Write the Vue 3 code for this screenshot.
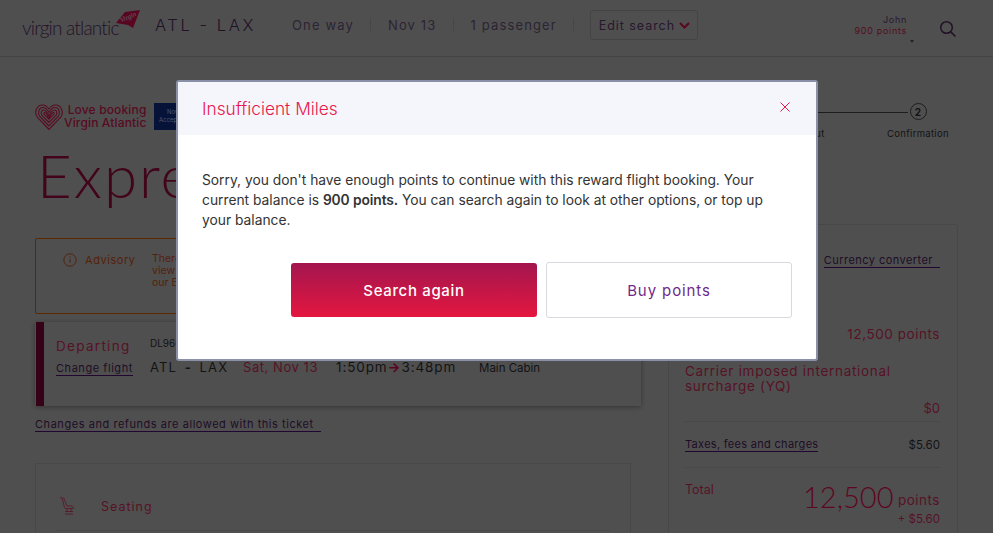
<script setup>
const title = 'Insufficient Miles'
</script>

<template>
  <div class="page">
    <header class="topbar">
      <div class="logo">
        <span class="logo-word">virgin atlantic</span>
        <svg class="logo-tail" width="24" height="18" viewBox="0 0 24 18">
          <polygon points="24,0 9,2 0,13 12,15 17,18" fill="#800a2e" />
          <text x="13" y="9" transform="rotate(-24 13 9)" class="logo-script">Virgin</text>
        </svg>
      </div>
      <span class="route">ATL - LAX</span>
      <div class="trip">
        <span>One way</span>
        <i></i>
        <span>Nov 13</span>
        <i></i>
        <span>1 passenger</span>
        <i></i>
      </div>
      <button class="edit">
        Edit search
        <svg width="11" height="7" viewBox="0 0 11 7"><path d="M1 1l4.500 4.500L10 1" fill="none" stroke="#800a2e" stroke-width="2" /></svg>
      </button>
      <div class="user">
        <span class="user-name">John</span>
        <span class="user-points">900 points</span>
        <span class="caret"></span>
      </div>
      <svg class="search" width="18" height="18" viewBox="0 0 18 18">
        <circle cx="7.500" cy="7.500" r="5.800" fill="none" stroke="#301a3a" stroke-width="1.500" />
        <path d="M11.800 11.800L16.500 16.500" stroke="#301a3a" stroke-width="1.700" />
      </svg>
    </header>

    <main class="main">
      <div class="top-row">
        <div class="banner">
          <svg width="28" height="26" viewBox="0 0 28 26" fill="none" stroke="#7e1030" stroke-width="1.100">
            <path d="M14 25.500L2.500 13.500C-1 9.500 1 1 7.500 1C10.500 1 12.500 2.800 14 5C15.500 2.800 17.500 1 20.500 1C27 1 29 9.500 25.500 13.500Z" />
            <path d="M14 22L4.800 12.500C2.500 9.800 3.500 3.500 7.800 3.500C10.500 3.500 12.500 5.800 14 8.500C15.500 5.800 17.500 3.500 20.200 3.500C24.500 3.500 25.500 9.800 23.200 12.500Z" />
            <path d="M14 18.500L7 11.500C5.500 9.500 6.200 6 8.300 6C10.800 6 12.500 8.800 14 12C15.500 8.800 17.200 6 19.700 6C21.800 6 22.500 9.500 21 11.500Z" />
            <path d="M14 15L9.300 10.500C8.500 9.500 8.800 8.500 9.500 8.500C11 8.500 12.800 11.500 14 15C15.200 11.500 17 8.500 18.500 8.500C19.200 8.500 19.500 9.500 18.700 10.500Z" />
          </svg>
          <div class="banner-text">Love booking<br />Virgin Atlantic</div>
          <div class="badge">Now<br />Accepting</div>
        </div>
        <div class="stepper">
          <div class="step">
            <span class="step-dot">1</span>
            <span class="step-label">Checkout</span>
          </div>
          <div class="step-line"></div>
          <div class="step">
            <span class="step-dot">2</span>
            <span class="step-label">Confirmation</span>
          </div>
        </div>
      </div>

      <h1 class="hero">Express checkout</h1>

      <div class="columns">
        <div class="left">
          <div class="advisory">
            <svg width="14" height="14" viewBox="0 0 14 14" fill="none" stroke="#7a3010">
              <circle cx="7" cy="7" r="6.200" />
              <path d="M7 6v4M7 3.500v1.200" />
            </svg>
            <span class="advisory-label">Advisory</span>
            <p class="advisory-text">There are travel restrictions in place,<br />view the latest information on<br />our Entry page.</p>
          </div>

          <div class="flight">
            <div class="flight-bar"></div>
            <div class="flight-side">
              <span class="departing">Departing</span>
              <a class="link">Change flight</a>
            </div>
            <div class="flight-info">
              <span class="flight-no">DL9665</span>
              <div class="flight-row">
                <span class="flight-route">ATL <b>-</b> LAX</span>
                <span class="flight-date">Sat, Nov 13</span>
                <span class="flight-time">1:50pm<em>→</em>3:48pm</span>
                <span class="flight-cabin">Main Cabin</span>
              </div>
            </div>
          </div>

          <a class="link changes">Changes and refunds are allowed with this ticket &nbsp;</a>

          <div class="extras">
            <div class="extras-row">
              <svg width="16" height="18" viewBox="0 0 16 18" fill="none" stroke="#7d1a36" stroke-width=".8">
                <path d="M1 .5l2 .3 2.500 9.700c.2.700.6 1 1.300 1h7c1 0 1.200-1.200.4-1.600L12.500 9H8L4.500 .5" />
                <path d="M6 14.500h8M6 17h8M8 12v2.500M12 12v2.500" />
              </svg>
              <span class="extras-label">Seating</span>
            </div>
          </div>
        </div>

        <aside class="summary">
          <a class="link converter">Currency converter &nbsp;</a>
          <div class="sum-points">12,500 points</div>
          <div class="sum-carrier">Carrier imposed international surcharge (YQ)</div>
          <div class="sum-zero">$0</div>
          <div class="sum-taxes">
            <a class="link">Taxes, fees and charges</a>
            <span>$5.60</span>
          </div>
          <div class="sum-total">
            <span class="total-label">Total</span>
            <div class="total-right">
              <div><span class="total-num">12,500</span> <span class="total-unit">points</span></div>
              <div class="total-extra">+ $5.60</div>
            </div>
          </div>
        </aside>
      </div>
    </main>

    <div class="overlay">
      <div class="modal">
        <div class="modal-head">
          <h2>{{ title }}</h2>
          <svg class="close" width="10" height="10" viewBox="0 0 10 10"><path d="M.5.500l9 9M9.500.500l-9 9" stroke="#e8174c" stroke-width="1" /></svg>
        </div>
        <div class="modal-body">
          <p>Sorry, you don't have enough points to continue with this reward flight booking. Your current balance is <strong>900 points.</strong> You can search again to look at other options, or top up your balance.</p>
          <div class="modal-actions">
            <button class="btn-primary">Search again</button>
            <button class="btn-outline">Buy points</button>
          </div>
        </div>
      </div>
    </div>
  </div>
</template>

<style>
html, body { margin: 0; overflow: hidden; }
</style>

<style scoped>
.page {
  position: relative;
  width: 993px;
  height: 533px;
  overflow: hidden;
  background: #727272;
  font-family: Inter, "Noto Sans", sans-serif;
  color: #1c1c1c;
}

.topbar {
  display: flex;
  align-items: center;
  height: 57px;
  box-sizing: border-box;
  border-bottom: 1px solid #626262;
  padding: 0 0 6px 22px;
}
.logo { display: flex; align-items: flex-end; width: 133px; height: 40px; flex: none; }
.logo-word {
  font-family: Lato, sans-serif;
  font-weight: 300;
  font-size: 19px;
  letter-spacing: -0.8px;
  color: #301a3a;
  margin-bottom: 6px;
  white-space: nowrap;
}
.logo-tail { margin: 0 0 17px -3px; flex: none; }
.logo-script { font-family: "Liberation Serif", serif; font-style: italic; font-size: 7px; fill: #8d8d8d; text-anchor: middle; }
.route { font-size: 16.500px; letter-spacing: 2.600px; color: #301a3a; width: 137px; flex: none; font-weight: 300; }
.trip { display: flex; align-items: center; gap: 16.500px; font-size: 13px; letter-spacing: 1.150px; color: #40344a; flex: none; }
.trip i { width: 1px; height: 14px; background: #666; }
.edit {
  margin-left: 16px;
  width: 108px;
  height: 30px;
  border: 1px solid #626262;
  border-radius: 3px;
  background: none;
  padding: 0;
  font: inherit;
  font-size: 12.500px;
  letter-spacing: 0.950px;
  color: #3a2244;
  display: flex;
  align-items: center;
  justify-content: center;
  gap: 4px;
  flex: none;
}
.user {
  position: relative;
  margin-left: auto;
  margin-top: -1px;
  display: flex;
  flex-direction: column;
  align-items: flex-end;
  font-size: 9px;
  letter-spacing: 0.700px;
  line-height: 11px;
}
.user-name { color: #3a2244; }
.user-points { color: #7a1030; }
.caret {
  position: absolute;
  right: -7px;
  bottom: -9px;
  border: 2px solid transparent;
  border-top: 3px solid #333;
}
.search { margin: 8px 36px 0 32px; flex: none; }

.main { padding: 46px 35px 0; }
.top-row { display: flex; justify-content: space-between; height: 36px; }
.banner { display: flex; align-items: flex-start; gap: 1px; }
.banner svg { margin-top: 1px; }
.banner-text { font-size: 12px; font-weight: 500; letter-spacing: .15px; line-height: 13px; color: #7e1030; text-align: right; }
.badge {
  background: #0a1a50;
  color: #6b7cab;
  font-size: 6px;
  line-height: 8px;
  width: 40px;
  height: 27px;
  padding-top: 5px;
  box-sizing: border-box;
  text-align: center;
  margin-left: 6px;
}
.stepper { display: flex; align-items: flex-start; margin-right: 8px; }
.step { position: relative; display: flex; flex-direction: column; align-items: center; width: 64px; }
.step-line { width: 96px; height: 1px; background: #2a2a2a; margin: 9px -22px 0; }
.step-dot {
  position: relative;
  width: 15px;
  height: 15px;
  border: 1px solid #2a2a2a;
  border-radius: 50%;
  background: #727272;
  font-size: 10px;
  font-weight: 700;
  display: flex;
  align-items: center;
  justify-content: center;
}
.step-label { font-size: 9.500px; letter-spacing: 0.300px; color: #1c1c1c; margin-top: 8px; }

.hero {
  margin: 0 0 0 2px;
  height: 85px;
  font-family: Lato, sans-serif;
  font-weight: 300;
  font-size: 60px;
  line-height: 72px;
  color: #5e0626;
  white-space: nowrap;
  letter-spacing: 2px;
}

.columns { display: grid; grid-template-columns: 606px 290px; gap: 27px; }
.left { padding-top: 14px; }

.advisory {
  height: 76px;
  box-sizing: border-box;
  border: 1px solid #853a00;
  border-radius: 2px;
  display: flex;
  align-items: flex-start;
  padding: 14px 0 0 27px;
  width: 606px;
}
.advisory-label { font-size: 11px; letter-spacing: 0.550px; color: #7a3010; margin-left: 8px; width: 67px; flex: none; }
.advisory-text { margin: 0; font-size: 10.500px; line-height: 12px; color: #7a3010; }

.flight {
  display: flex;
  height: 84px;
  margin-top: 8px;
  box-shadow: 0 1px 5px rgba(0, 0, 0, .35);
}
.flight-bar { width: 8px; background: #4e0020; margin-left: 1px; }
.flight-side { width: 94px; padding: 16px 0 0 12px; display: flex; flex-direction: column; align-items: flex-start; gap: 8px; flex: none; box-sizing: content-box; }
.departing { font-size: 13.500px; letter-spacing: 1.300px; color: #7d1a36; }
.link { font-size: 11px; letter-spacing: 0.300px; color: #2e1236; border-bottom: 1px solid #2e0a46; line-height: 13px; white-space: nowrap; }
.flight-side .link { letter-spacing: .55px; }
.flight-info { padding-top: 15px; }
.flight-no { display: block; font-size: 10px; height: 22px; }
.flight-row { display: flex; align-items: baseline; white-space: nowrap; }
.flight-route { width: 93px; font-size: 13px; letter-spacing: 1.100px; }
.flight-route b { margin: 0 3px; }
.flight-date { width: 93px; font-size: 13px; color: #7d1a36; letter-spacing: .55px; }
.flight-time { width: 143px; font-size: 13.500px; letter-spacing: .9px; }
.flight-time em { font-style: normal; font-weight: 700; color: #800a2e; }
.flight-cabin { font-size: 11.500px; }

.changes { display: inline-block; margin-top: 12px; letter-spacing: .55px; }

.extras {
  margin-top: 31px;
  width: 596px;
  height: 120px;
  box-sizing: border-box;
  border: 1px solid #676767;
  padding: 0 20px;
}
.extras-row {
  display: flex;
  align-items: center;
  gap: 26px;
  height: 67px;
  box-sizing: border-box;
  padding: 18px 0 0 3px;
  border-bottom: 1px solid #676767;
}
.extras-label { font-size: 12.500px; letter-spacing: 1px; color: #7d1a36; }

.summary {
  height: 330px;
  box-sizing: border-box;
  border: 1px solid #676767;
  border-radius: 3px;
  padding: 29px 17px 0 16px;
  display: flex;
  flex-direction: column;
}
.converter { align-self: flex-end; letter-spacing: .45px; }
.sum-points { text-align: right; margin-top: 58px; font-size: 13.500px; letter-spacing: .55px; color: #7d1a36; }
.sum-carrier { margin-top: 22px; font-size: 13.500px; line-height: 15px; letter-spacing: .7px; color: #7d1a36; }
.sum-zero { text-align: right; margin-top: 6px; font-size: 13px; color: #7d1a36; padding-bottom: 5px; border-bottom: 1px solid #676767; }
.sum-taxes { display: flex; justify-content: space-between; align-items: center; height: 45px; border-bottom: 1px solid #676767; font-size: 11.500px; }
.sum-total { display: flex; justify-content: space-between; padding-top: 14px; }
.total-label { font-size: 12.500px; color: #7d1a36; }
.total-right { text-align: right; }
.total-num { font-family: Lato, sans-serif; font-weight: 300; font-size: 29px; line-height: 30px; color: #860a30; }
.total-unit { font-size: 13.500px; letter-spacing: .5px; color: #7d1a36; vertical-align: 3px; }
.total-extra { font-size: 11.500px; color: #7d1a36; margin-top: 0; }

.overlay {
  position: absolute;
  inset: 0;
  background: rgba(0, 0, 0, .3);
  display: flex;
  justify-content: center;
  align-items: flex-start;
  padding: 80px 0 0 1px;
  box-sizing: border-box;
}
.modal {
  width: 642px;
  height: 281px;
  box-sizing: border-box;
  background: #fff;
  border: 2px solid #8a90a8;
  border-radius: 3px;
}
.modal-head {
  position: relative;
  height: 53px;
  background: #f5f6fb;
  padding-left: 24px;
  display: flex;
  align-items: center;
}
.modal-head h2 { margin: 0; font-size: 17.300px; font-weight: 300; color: #e8174c; }
.close { position: absolute; right: 26px; top: 20px; }
.modal-body { padding: 35px 24px 0; }
.modal-body p { margin: 0; font-size: 13.800px; line-height: 20px; color: #333; }
.modal-body strong { font-weight: 600; letter-spacing: -.1px; }
.modal-actions { display: flex; justify-content: flex-end; align-items: center; gap: 9px; margin-top: 32px; }
.btn-primary, .btn-outline {
  width: 246px;
  font: inherit;
  font-size: 15px;
  padding: 0;
  border-radius: 3px;
}
.btn-primary {
  height: 54px;
  border: 0;
  color: #fff;
  font-weight: 500;
  letter-spacing: .65px;
  background: linear-gradient(#a3154f, #e4173f);
}
.btn-outline {
  height: 56px;
  border: 1px solid #d8d8de;
  background: #fff;
  color: #6f2a8a;
  letter-spacing: .9px;
}
</style>
